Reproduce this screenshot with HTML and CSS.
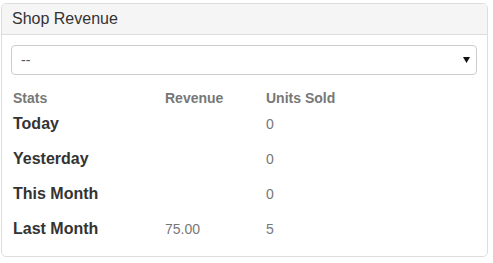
FILE: index.html
```html
<!DOCTYPE html>
<html lang="en">
<head>
  <meta charset="UTF-8" />
  <meta name="viewport" content="width=device-width, initial-scale=1.0" />
  <title>Shop Revenue</title>
  <link rel="stylesheet" href="styles.css">
</head>
<body>
  <div class="panel">
    <div class="panel-heading">Shop Revenue</div>
    <div class="panel-body">
      <div class="select-wrap">
        <select class="shop-select">
          <option>--</option>
        </select>
        <svg class="select-arrow" width="7" height="6" viewBox="0 0 7 6"><path d="M0 0 H7 L3.5 6 Z" fill="#111"/></svg>
      </div>

      <div class="stats">
        <div class="stats-row stats-head">
          <span>Stats</span>
          <span>Revenue</span>
          <span>Units Sold</span>
        </div>
        <div class="stats-row">
          <span class="label">Today</span>
          <span class="value"></span>
          <span class="value">0</span>
        </div>
        <div class="stats-row">
          <span class="label">Yesterday</span>
          <span class="value"></span>
          <span class="value">0</span>
        </div>
        <div class="stats-row">
          <span class="label">This Month</span>
          <span class="value"></span>
          <span class="value">0</span>
        </div>
        <div class="stats-row">
          <span class="label">Last Month</span>
          <span class="value">75.00</span>
          <span class="value">5</span>
        </div>
      </div>
    </div>
  </div>
</body>
</html>
```

FILE: styles.css
```css
body {
  margin: 3px 5px 0 1px;
  font-family: 'Liberation Sans', Arial, Helvetica, sans-serif;
  color: #333;
  background: #fff;
}
.panel {
  border: 1px solid #ddd;
  border-radius: 5px;
  overflow: hidden;
}
.panel-heading {
  background: #f5f5f5;
  border-bottom: 1px solid #ddd;
  padding: 6px 10px;
  font-size: 16px;
  line-height: 18px;
  color: #333;
}
.panel-body {
  padding: 10px 10px 10px 9px;
}
.select-wrap {
  position: relative;
}
.shop-select {
  display: block;
  width: 100%;
  height: 30px;
  padding: 0 9px;
  font-family: inherit;
  font-size: 14px;
  color: #555;
  background: #fff;
  border: 1px solid #ccc;
  border-radius: 4px;
  appearance: none;
  -webkit-appearance: none;
}
.select-arrow {
  position: absolute;
  right: 7px;
  top: 12px;
}
.stats {
  margin-top: 14px;
}
.stats-row {
  display: grid;
  grid-template-columns: 152px 101px 1fr;
  align-items: center;
  height: 35px;
  padding-left: 2px;
}
.stats-head {
  height: 17px;
  font-size: 14px;
  font-weight: bold;
  color: #777;
}
.label {
  font-size: 16px;
  font-weight: bold;
  color: #333;
}
.value {
  font-size: 14px;
  color: #777;
}
```
